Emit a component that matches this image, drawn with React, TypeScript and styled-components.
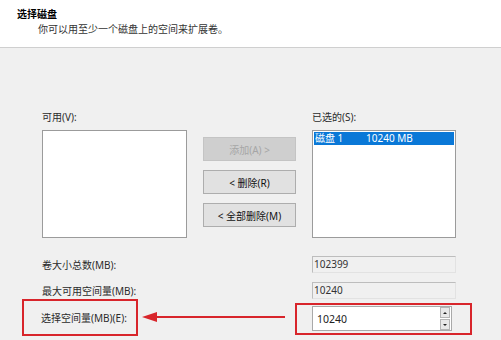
import React from 'react';
import styled, { createGlobalStyle } from 'styled-components';

const GlobalStyle = createGlobalStyle`
  html, body {
    margin: 0;
    padding: 0;
    background: #f0f0f0;
  }
  body {
    font-family: "Noto Sans", "Noto Sans CJK SC", sans-serif;
    overflow: hidden;
  }
`;

const Window = styled.div`
  width: 501px;
  height: 340px;
  overflow: hidden;
  background: #f0f0f0;
  font-size: 10px;
  color: #2b2b2b;
`;

const Header = styled.div`
  height: 40px;
  padding: 7px 0 0 17px;
  background: #fff;
  border-bottom: 1px solid #cfcfcf;
`;

const Title = styled.div`
  font-weight: bold;
  line-height: 14px;
  color: #000;
`;

const Subtitle = styled.div`
  margin-top: 1px;
  padding-left: 21px;
  line-height: 14px;
  color: #333;
`;

const Body = styled.div`
  padding-left: 42px;
`;

const ListArea = styled.div`
  margin-top: 62px;
  display: grid;
  grid-template-columns: 145px 93px 144px;
  column-gap: 16px;
  align-items: start;
`;

const Column = styled.div`
  display: flex;
  flex-direction: column;
  gap: 6px;
`;

const Label = styled.div`
  line-height: 14px;
  white-space: nowrap;
`;

const ListBox = styled.div`
  height: 104px;
  background: #fff;
  border: 1px solid #9b9b9b;
  padding: 1px;
`;

const ListItem = styled.div<{ $selected?: boolean }>`
  display: flex;
  height: 13px;
  line-height: 13px;
  padding-left: 1px;
  background: ${(p) => (p.$selected ? '#0a78d7' : 'transparent')};
  color: ${(p) => (p.$selected ? '#fff' : '#000')};
  span:first-child {
    width: 51px;
  }
`;

const ButtonStack = styled.div`
  margin-top: 27px;
  display: flex;
  flex-direction: column;
  gap: 9px;
`;

const Button = styled.div<{ $disabled?: boolean }>`
  height: 22px;
  display: flex;
  align-items: center;
  justify-content: center;
  background: ${(p) => (p.$disabled ? '#cfcfcf' : '#e1e1e1')};
  border: 1px solid ${(p) => (p.$disabled ? '#c4c4c4' : '#adadad')};
  color: ${(p) => (p.$disabled ? '#a6a6a6' : '#111')};
  white-space: nowrap;
`;

const Fields = styled.div`
  margin-top: 18px;
  display: flex;
  flex-direction: column;
  gap: 9px;
`;

const FieldRow = styled.div`
  display: grid;
  grid-template-columns: 270px 144px;
  align-items: center;
`;

const ReadOnlyField = styled.div`
  box-sizing: border-box;
  height: 17px;
  line-height: 15px;
  padding-left: 1px;
  border: 1px solid;
  border-color: #bdbdbd #e2e2e2 #e2e2e2 #bdbdbd;
  color: #333;
`;

const AnnotRow = styled.div`
  margin: -9px 0 0 -20px;
  display: flex;
  align-items: flex-start;
`;

const RedLabelBox = styled.div`
  box-sizing: border-box;
  width: 116px;
  height: 37px;
  padding-left: 17px;
  display: flex;
  align-items: center;
  border: 2px solid #d8252b;
`;

const Arrow = styled.svg`
  margin: 13px 10px 0 4px;
  flex: none;
`;

const RedFieldBox = styled.div`
  margin-top: 4px;
  padding: 1px 18px 2px 15px;
  border: 2px solid #d8252b;
`;

const SpinBox = styled.div`
  box-sizing: border-box;
  width: 140px;
  height: 25px;
  display: flex;
  align-items: center;
  background: #fff;
  border: 1px solid #a9a9a9;
  padding: 1px 1px 1px 4px;
`;

const SpinText = styled.div`
  flex: 1;
  color: #222;
  font-size: 10.5px;
`;

const SpinButtons = styled.div`
  display: flex;
  flex-direction: column;
  gap: 1px;
`;

const SpinButton = styled.div<{ $down?: boolean }>`
  width: 8px;
  height: 9px;
  display: flex;
  align-items: center;
  justify-content: center;
  background: #e8e8e8;
  border: 1px solid #b4b4b4;
  &::after {
    content: '';
    border-left: 2px solid transparent;
    border-right: 2px solid transparent;
    ${(p) => (p.$down ? 'border-top: 2px solid #222;' : 'border-bottom: 2px solid #222;')}
  }
`;

export default function App() {
  return (
    <Window>
      <GlobalStyle />
      <Header>
        <Title>选择磁盘</Title>
        <Subtitle>你可以用至少一个磁盘上的空间来扩展卷。</Subtitle>
      </Header>
      <Body>
        <ListArea>
          <Column>
            <Label>可用(V):</Label>
            <ListBox />
          </Column>
          <ButtonStack>
            <Button $disabled>添加(A) &gt;</Button>
            <Button>&lt; 删除(R)</Button>
            <Button>&lt; 全部删除(M)</Button>
          </ButtonStack>
          <Column>
            <Label>已选的(S):</Label>
            <ListBox>
              <ListItem $selected>
                <span>磁盘 1</span>
                <span>10240 MB</span>
              </ListItem>
            </ListBox>
          </Column>
        </ListArea>
        <Fields>
          <FieldRow>
            <Label>卷大小总数(MB):</Label>
            <ReadOnlyField>102399</ReadOnlyField>
          </FieldRow>
          <FieldRow>
            <Label>最大可用空间量(MB):</Label>
            <ReadOnlyField>10240</ReadOnlyField>
          </FieldRow>
          <AnnotRow>
            <RedLabelBox>
              <Label>选择空间量(MB)(E):</Label>
            </RedLabelBox>
            <Arrow width="143" height="10" viewBox="0 0 143 10">
              <polygon points="0,5 15,0 15,10" fill="#d8252b" />
              <line x1="14" y1="5" x2="143" y2="5" stroke="#d8252b" strokeWidth="2" />
            </Arrow>
            <RedFieldBox>
              <SpinBox>
                <SpinText>10240</SpinText>
                <SpinButtons>
                  <SpinButton />
                  <SpinButton $down />
                </SpinButtons>
              </SpinBox>
            </RedFieldBox>
          </AnnotRow>
        </Fields>
      </Body>
    </Window>
  );
}
